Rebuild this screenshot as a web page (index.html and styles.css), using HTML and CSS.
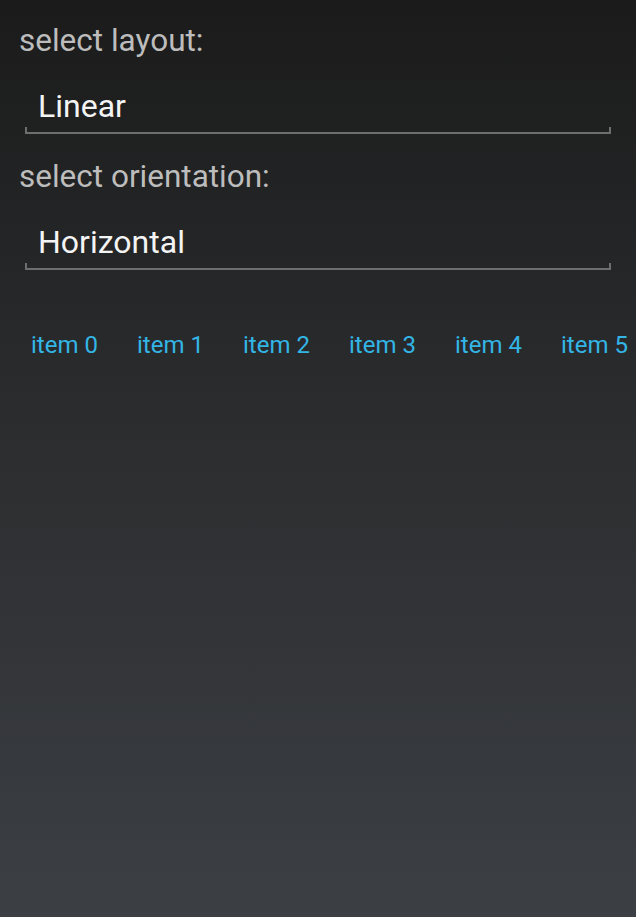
FILE: index.html
```html
<!DOCTYPE html>
<html>
<head>
<meta charset="utf-8">
<link rel="stylesheet" href="styles.css">
</head>
<body>
<div class="screen">
  <div class="label first">select layout:</div>
  <div class="spinner">
    <div class="value">Linear</div>
    <div class="underline"></div>
  </div>
  <div class="label second">select orientation:</div>
  <div class="spinner">
    <div class="value">Horizontal</div>
    <div class="underline"></div>
  </div>
  <div class="items">
    <div class="item">item 0</div>
    <div class="item">item 1</div>
    <div class="item">item 2</div>
    <div class="item">item 3</div>
    <div class="item">item 4</div>
    <div class="item">item 5</div>
  </div>
</div>
</body>
</html>
```
FILE: styles.css
```css
html, body {
  margin: 0;
  padding: 0;
  height: 100%;
}
body {
  background: linear-gradient(to bottom, #1b1b1b 0%, #2c2e30 50%, #3c3f44 100%);
  font-family: Roboto, "Noto Sans", sans-serif;
  overflow: hidden;
}
.screen {
  width: 636px;
  height: 917px;
  box-sizing: border-box;
  padding-left: 19px;
  padding-top: 23px;
}
.label {
  font-size: 31.5px;
  line-height: 36px;
  color: #bdbdbd;
  white-space: nowrap;
}
.label.first {
  margin-top: 0;
}
.label.second {
  margin-top: 25px;
}
.spinner {
  margin-top: 27px;
  margin-left: 6px;
  width: 586px;
}
.value {
  font-size: 32px;
  line-height: 41px;
  color: #f4f4f4;
  padding-left: 13px;
}
.underline {
  height: 5px;
  border-left: 2px solid #6e6e6e;
  border-right: 2px solid #6e6e6e;
  border-bottom: 2px solid #6e6e6e;
}
.items {
  display: flex;
  margin-left: -5px;
  margin-top: 60px;
  white-space: nowrap;
}
.item {
  flex: 0 0 106px;
  font-size: 24px;
  line-height: 30px;
  color: #33b5e5;
  padding-left: 17px;
  box-sizing: border-box;
}
```
